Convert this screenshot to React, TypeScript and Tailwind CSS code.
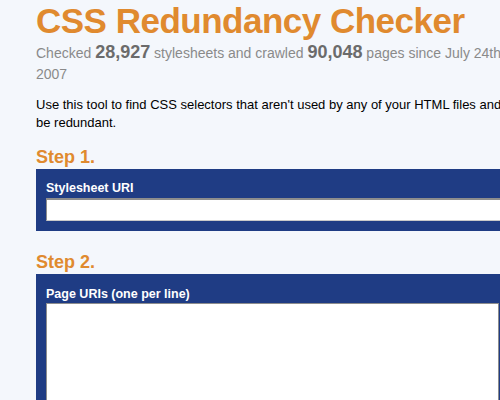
export default function App() {
  return (
    <div className="h-[400px] w-[500px] overflow-hidden bg-[#f4f7fc] font-['Liberation_Sans',Arial,sans-serif]">
      <div className="ml-[36px] w-[600px]">
        <h1 className="text-[35px] font-bold leading-[41px] tracking-[-0.5px] text-[#e08a2f]">CSS Redundancy Checker</h1>
        <p className="mt-[1px] text-[14px] leading-[21px] text-[#8a8a8a]">
          Checked <strong className="text-[18px] text-[#6b6b6b]">28,927</strong> stylesheets and crawled{' '}
          <strong className="text-[18px] text-[#6b6b6b]">90,048</strong> pages since July 24th
          <br />
          2007
        </p>
        <p className="mt-[11px] text-[13px] leading-[18px] text-black">
          Use this tool to find CSS selectors that aren't used by any of your HTML files and may
          <br />
          be redundant.
        </p>

        <h2 className="mt-[13px] text-[18px] font-bold leading-[24px] text-[#e08a2f]">Step 1.</h2>
        <div className="bg-[#1f3c84] px-[10px] pb-[10px] pt-[11px]">
          <label className="block text-[12.5px] font-bold leading-[16px] text-white">Stylesheet URI</label>
          <input className="mt-[2px] block h-[23px] w-[560px] border border-t-2 border-[#8d8d8d] border-b-[#c9c9c9] bg-white" />
        </div>

        <h2 className="mt-[19px] text-[18px] font-bold leading-[24px] text-[#e08a2f]">Step 2.</h2>
        <div className="bg-[#1f3c84] px-[10px] pb-[10px] pt-[12px]">
          <label className="block text-[12.5px] font-bold leading-[16px] text-white">Page URIs (one per line)</label>
          <textarea className="mt-[1px] block h-[150px] w-[453px] resize-none border border-[#8d8d8d] bg-white" />
        </div>
      </div>
    </div>
  )
}
